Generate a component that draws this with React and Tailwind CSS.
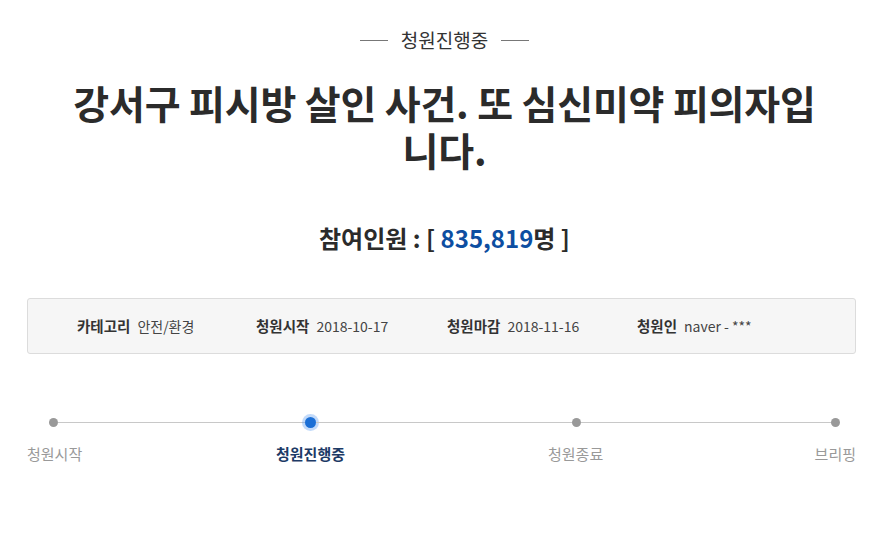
const infoItems = [
  { label: '카테고리', value: '안전/환경', w: 'w-[179px]' },
  { label: '청원시작', value: '2018-10-17', w: 'w-[191px]' },
  { label: '청원마감', value: '2018-11-16', w: 'w-[190px]' },
  { label: '청원인', value: 'naver - ***', w: '' },
];

const Dot = ({ active }) =>
  active ? (
    <span className="w-[11px] h-[11px] rounded-full bg-[#1b6fd6] shadow-[0_0_0_3px_rgba(80,150,240,0.35)] shrink-0" />
  ) : (
    <span className="w-[9px] h-[9px] rounded-full bg-[#999] shrink-0" />
  );

const App = () => {
  return (
    <div
      className="w-[889px] h-[541px] bg-white text-[#333] overflow-hidden"
      style={{ fontFamily: '"Noto Sans CJK KR", "Noto Sans", sans-serif' }}
    >
      {/* status */}
      <div className="pt-[26px] flex items-center justify-center gap-[13px]">
        <span className="w-[28px] h-px bg-[#777]" />
        <span className="text-[19px] leading-[28px] text-[#333]">청원진행중</span>
        <span className="w-[28px] h-px bg-[#777]" />
      </div>

      {/* title */}
      <h1 className="mx-auto mt-[25px] w-[760px] text-center text-[39px] leading-[47px] font-bold text-[#2b2b2b] tracking-[-0.2px]">
        강서구 피시방 살인 사건. 또 심신미약 피의자입니다.
      </h1>

      {/* count */}
      <div className="mt-[49px] text-center text-[24px] leading-[32px] font-bold text-[#2b2b2b]">
        참여인원 : [ <span className="text-[#0d4ea1]">835,819</span>명 ]
      </div>

      {/* info box */}
      <div className="ml-[27px] w-[829px] mt-[44px] h-[56px] bg-[#f6f6f6] border border-[#dcdcdc] rounded-[3px] flex items-center pl-[49px] text-[14px]">
        {infoItems.map(({ label, value, w }) => (
          <div key={label} className={`flex items-center gap-[7px] ${w}`}>
            <span className="font-bold text-[#333] text-[14.5px]">{label}</span>
            <span className="text-[#444]">{value}</span>
          </div>
        ))}
      </div>

      {/* progress */}
      <div className="mt-[62px] ml-[27px] w-[829px]">
        <div className="flex items-center pl-[22px] h-[12px]">
          <Dot />
          <span className="w-[247px] h-px bg-[#c8c8c8]" />
          <Dot active />
          <span className="w-[256px] h-px bg-[#c8c8c8]" />
          <Dot />
          <span className="w-[250px] h-px bg-[#c8c8c8]" />
          <Dot />
        </div>
        <div className="mt-[15px] flex text-[15px] leading-[22px]">
          <span className="text-[#999] w-[249px]">청원시작</span>
          <span className="text-[#1d3a66] font-bold w-[272px]">청원진행중</span>
          <span className="text-[#999] flex-1">청원종료</span>
          <span className="text-[#999]">브리핑</span>
        </div>
      </div>
    </div>
  );
};

export default App;
